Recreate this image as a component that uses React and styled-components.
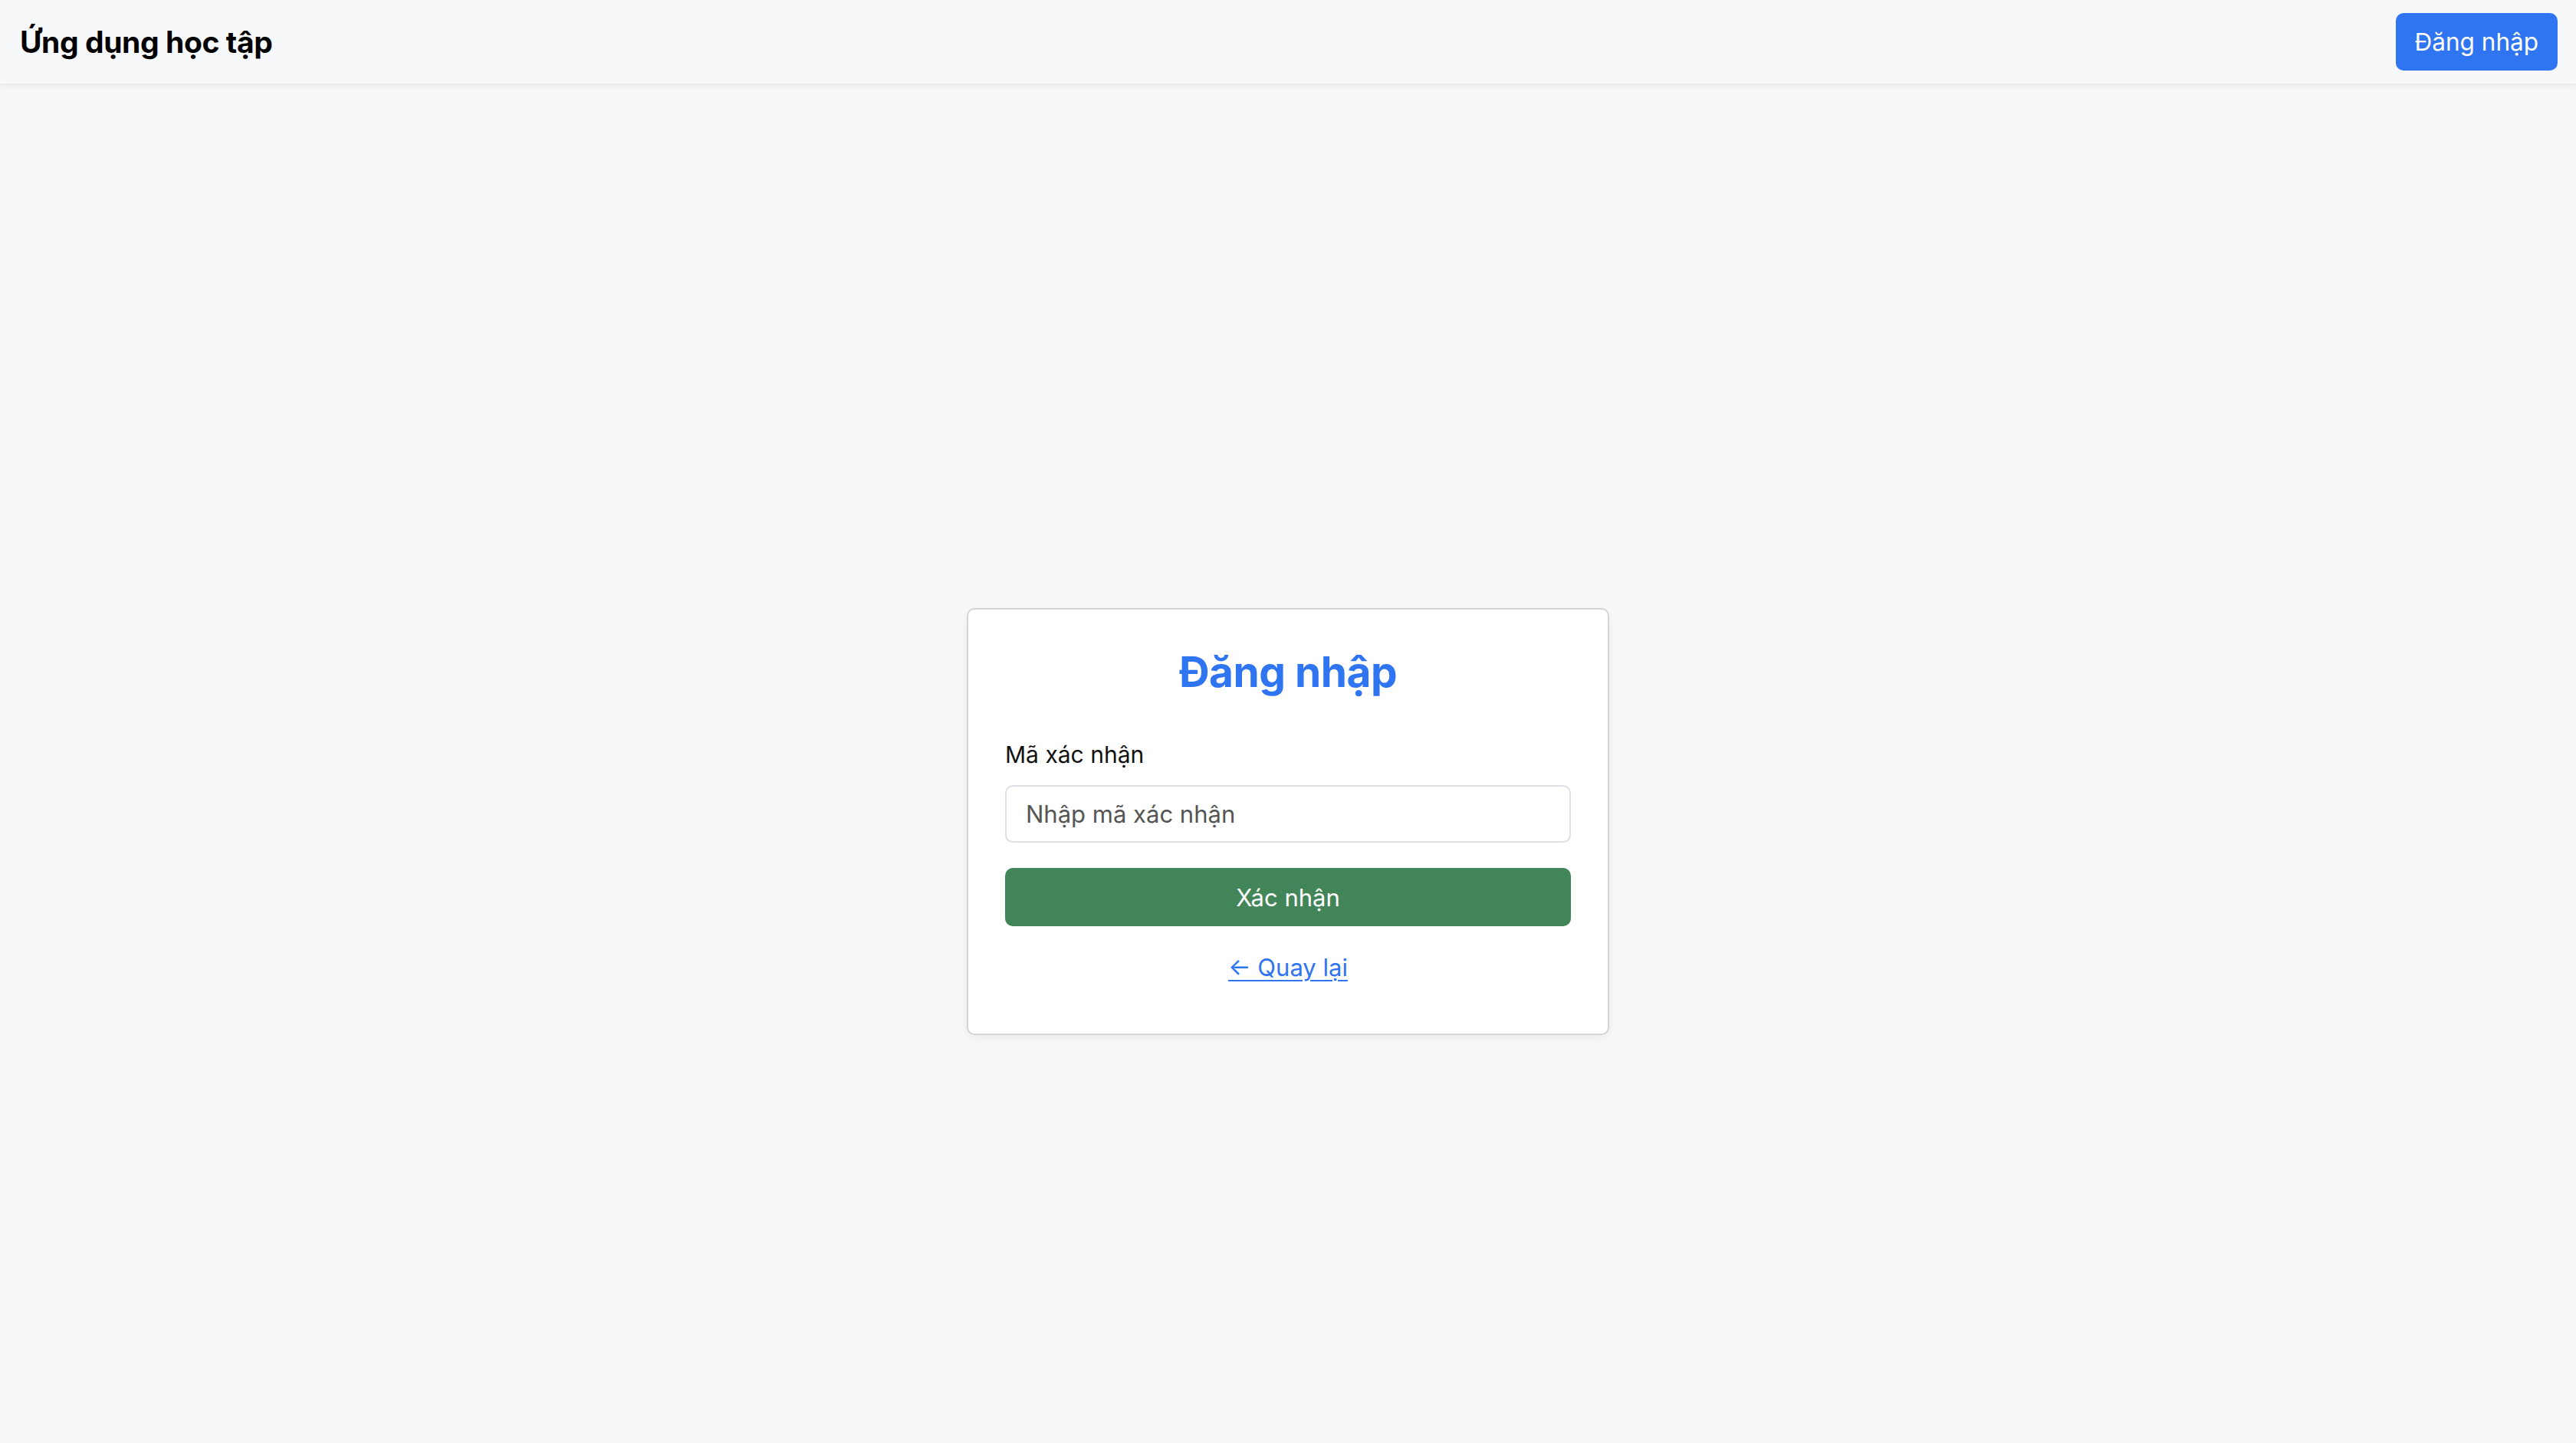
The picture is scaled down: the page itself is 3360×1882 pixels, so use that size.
import React from 'react';
import styled, { createGlobalStyle } from 'styled-components';

const GlobalStyle = createGlobalStyle`
  * { box-sizing: border-box; }
  body {
    margin: 0;
    background: #f7f8fa;
    font-family: Inter, "Noto Sans", "Liberation Sans", sans-serif;
    color: #111;
  }
`;

const Header = styled.header`
  height: 109px;
  display: flex;
  align-items: center;
  justify-content: space-between;
  padding: 0 24px 0 26px;
  background: #f7f8fa;
  box-shadow: 0 3px 8px rgba(0, 0, 0, 0.08);
  position: relative;
  z-index: 1;
`;

const Brand = styled.div`
  font-size: 39px;
  font-weight: 700;
  color: #000;
  letter-spacing: -0.4px;
`;

const HeaderButton = styled.button`
  height: 75px;
  padding: 0 25px;
  border: none;
  border-radius: 10px;
  background: #2f74f0;
  color: #fff;
  font-family: inherit;
  font-size: 31.5px;
  cursor: pointer;
`;

const Main = styled.main`
  min-height: calc(100vh - 109px);
  padding-top: 152px;
  display: flex;
  align-items: center;
  justify-content: center;
`;

const Card = styled.div`
  width: 838px;
  padding: 48px 48px 68px;
  background: #fff;
  border: 2px solid #d6d6d6;
  border-radius: 10px;
  box-shadow: 0 4px 12px rgba(0, 0, 0, 0.06);
  display: flex;
  flex-direction: column;
`;

const Title = styled.h2`
  margin: 0 0 57px;
  text-align: center;
  font-size: 55px;
  font-weight: 700;
  color: #2f74f0;
  letter-spacing: -0.5px;
  line-height: 1.2;
`;

const Label = styled.label`
  font-size: 30px;
  color: #111;
  margin-bottom: 22px;
`;

const Input = styled.input`
  height: 75px;
  width: 100%;
  padding: 0 25px;
  border: 2px solid #dcdfe4;
  border-radius: 10px;
  font-family: inherit;
  font-size: 31px;
  color: #111;
  outline: none;
  &::placeholder { color: #555; }
`;

const SubmitButton = styled.button`
  margin-top: 33px;
  height: 76px;
  width: 100%;
  border: none;
  border-radius: 10px;
  background: #418559;
  color: #fff;
  font-family: inherit;
  font-size: 31px;
  cursor: pointer;
`;

const BackLink = styled.a`
  margin-top: 35px;
  align-self: center;
  font-size: 31px;
  color: #2f74f0;
  text-decoration: underline;
  text-underline-offset: 5px;
  text-decoration-thickness: 2px;
  cursor: pointer;
`;

export default function App() {
  return (
    <>
      <GlobalStyle />
      <Header>
        <Brand>Ứng dụng học tập</Brand>
        <HeaderButton>Đăng nhập</HeaderButton>
      </Header>
      <Main>
        <Card>
          <Title>Đăng nhập</Title>
          <Label htmlFor="code">Mã xác nhận</Label>
          <Input id="code" placeholder="Nhập mã xác nhận" />
          <SubmitButton>Xác nhận</SubmitButton>
          <BackLink>← Quay lại</BackLink>
        </Card>
      </Main>
    </>
  );
}
